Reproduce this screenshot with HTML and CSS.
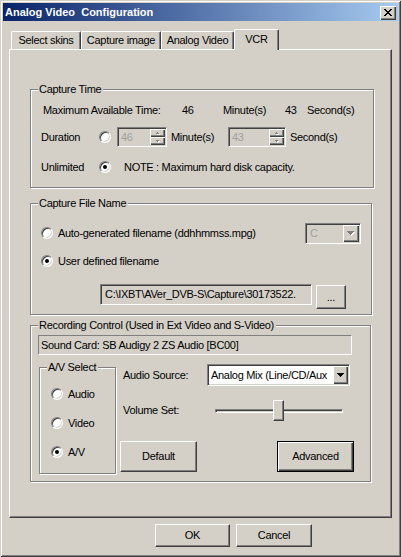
FILE: index.html
```html
<!DOCTYPE html>
<html>
<head>
<meta charset="utf-8">
<link rel="stylesheet" href="styles.css">
</head>
<body>
<div class="window">
  <div class="titlebar">
    <span class="title">Analog Video&nbsp; Configuration</span>
    <span class="close"><svg width="8" height="7" viewBox="0 0 8 7"><path d="M0 0h2v1H0zM6 0h2v1H6zM1 1h2v1H1zM5 1h2v1H5zM2 2h4v1H2zM3 3h2v1H3zM2 4h4v1H2zM1 5h2v1H1zM5 5h2v1H5zM0 6h2v1H0zM6 6h2v1H6z" fill="#000"/></svg></span>
  </div>
  <div class="tabs">
    <div class="tab tab-skins">Select skins</div>
    <div class="tab tab-capture">Capture image</div>
    <div class="tab tab-analog">Analog Video</div>
    <div class="tab tab-vcr sel">VCR</div>
  </div>
  <div class="panel">
    <div class="group g1">
      <div class="legend">Capture Time</div>
      <div class="row r1">
        <span class="c-maxlbl">Maximum Available Time:</span>
        <span class="c-min-val">46</span>
        <span class="c-min-lbl">Minute(s)</span>
        <span class="c-sec-val">43</span>
        <span>Second(s)</span>
      </div>
      <div class="row r2">
        <span class="c-optlbl">Duration</span>
        <span class="radio"></span>
        <div class="spin s1"><span class="spinval">46</span><span class="spinbtns"><span class="sbtn"><svg width="7" height="5" viewBox="0 0 7 5"><path d="M3 1h1v1h1v1H2V2h1z" fill="#fff" transform="translate(1 1)"/><path d="M3 1h1v1h1v1H2V2h1z" fill="#808080"/></svg></span><span class="sbtn"><svg width="7" height="5" viewBox="0 0 7 5"><path d="M2 1h3v1H4v1H3V2H2z" fill="#fff" transform="translate(1 1)"/><path d="M2 1h3v1H4v1H3V2H2z" fill="#808080"/></svg></span></span></div>
        <span class="c-spinlbl">Minute(s)</span>
        <div class="spin s2"><span class="spinval">43</span><span class="spinbtns"><span class="sbtn"><svg width="7" height="5" viewBox="0 0 7 5"><path d="M3 1h1v1h1v1H2V2h1z" fill="#fff" transform="translate(1 1)"/><path d="M3 1h1v1h1v1H2V2h1z" fill="#808080"/></svg></span><span class="sbtn"><svg width="7" height="5" viewBox="0 0 7 5"><path d="M2 1h3v1H4v1H3V2H2z" fill="#fff" transform="translate(1 1)"/><path d="M2 1h3v1H4v1H3V2H2z" fill="#808080"/></svg></span></span></div>
        <span class="c-seclbl">Second(s)</span>
      </div>
      <div class="row r3">
        <span class="c-optlbl">Unlimited</span>
        <span class="radio on"></span>
        <span class="c-note">NOTE : Maximum hard disk capacity.</span>
      </div>
    </div>

    <div class="group g2">
      <div class="legend">Capture File Name</div>
      <div class="row fr1">
        <span class="radio"></span>
        <span class="rlabel">Auto-generated filename (ddhhmmss.mpg)</span>
        <div class="combo combo-drive"><span class="ctext">C</span><span class="dropbtn"><svg width="8" height="5" viewBox="0 0 8 5"><path d="M0 0h7v1H6v1H5v1H4v1H3V3H2V2H1V1H0z" fill="#fff" transform="translate(1 1)"/><path d="M0 0h7v1H6v1H5v1H4v1H3V3H2V2H1V1H0z" fill="#808080"/></svg></span></div>
      </div>
      <div class="row fr2">
        <span class="radio on"></span>
        <span class="rlabel">User defined filename</span>
      </div>
      <div class="row fr3">
        <div class="pathbox">C:\IXBT\AVer_DVB-S\Capture\30173522.</div>
        <div class="btn btn-dots">...</div>
      </div>
    </div>

    <div class="group g3">
      <div class="legend">Recording Control (Used in Ext Video and S-Video)</div>
      <div class="soundcard">Sound Card: SB Audigy 2 ZS Audio [BC00]</div>
      <div class="rec-body">
        <div class="group avsel">
          <div class="legend">A/V Select</div>
          <div class="row avr"><span class="radio"></span><span class="rlabel">Audio</span></div>
          <div class="row avr"><span class="radio"></span><span class="rlabel">Video</span></div>
          <div class="row avr"><span class="radio on"></span><span class="rlabel">A/V</span></div>
        </div>
        <div class="rec-controls">
          <div class="row ctl-src">
            <span class="ctl-label">Audio Source:</span>
            <div class="combo combo-src"><span class="ctext">Analog Mix (Line/CD/Aux</span><span class="dropbtn"><svg width="7" height="4" viewBox="0 0 7 4"><path d="M0 0h7v1H6v1H5v1H4v1H3V3H2V2H1V1H0z" fill="#000"/></svg></span></div>
          </div>
          <div class="row ctl-vol">
            <span class="ctl-label">Volume Set:</span>
            <div class="slider"><div class="track"></div><div class="thumb"></div></div>
          </div>
          <div class="btnrow">
            <div class="btn btn-big">Default</div>
            <div class="btn btn-big btn-default btn-adv">Advanced</div>
          </div>
        </div>
      </div>
    </div>
  </div>
  <div class="footer">
    <div class="btn btn-ok">OK</div>
    <div class="btn btn-cancel">Cancel</div>
  </div>
</div>
</body>
</html>
```
FILE: styles.css
```css
* { box-sizing: border-box; }
html, body { margin: 0; padding: 0; }
body {
  width: 401px; height: 557px; overflow: hidden;
  background: #D4D0C8;
  font-family: "Liberation Sans", Arial, sans-serif;
  font-size: 11px; line-height: 13px; letter-spacing: -0.3px;
  color: #000;
}
.window {
  width: 401px; height: 557px; padding: 3px;
  background: #D4D0C8;
  box-shadow: inset 1px 1px #D4D0C8, inset -1px -1px #404040, inset 2px 2px #fff, inset -2px -2px #808080;
}
.titlebar {
  height: 18px; display: flex; align-items: center;
  padding: 0 2px;
  background: linear-gradient(to right, #0A246A, #A6CAF0);
}
.title { flex: 1; color: #fff; font-weight: bold; letter-spacing: 0; }
.close {
  width: 16px; height: 14px; margin-top: 1px;
  display: flex; align-items: center; justify-content: center;
  background: #D4D0C8;
  box-shadow: inset 1px 1px #fff, inset -1px -1px #404040, inset -2px -2px #808080;
}
.close svg { display: block; }

/* tabs */
.tabs {
  display: flex; align-items: flex-end; height: 20px;
  margin: 8px 0 0 8px; position: relative; z-index: 1;
}
.tab {
  height: 18px; text-align: center; line-height: 16px;
  background: #D4D0C8;
  border-top: 1px solid #fff; border-left: 1px solid #fff; border-right: 1px solid #404040;
  border-radius: 2px 2px 0 0;
  box-shadow: inset -1px 0 #808080;
}
.tab-skins { width: 70px; }
.tab-capture { width: 80px; }
.tab-analog { width: 73px; }
.tab-vcr { width: 45px; }
.tab.sel { height: 21px; margin-bottom: -1px; line-height: 18px; }

/* panel */
.panel {
  width: 383px; height: 469px; margin-left: 6px;
  border-top: 1px solid #fff; border-left: 1px solid #fff;
  border-right: 1px solid #404040; border-bottom: 1px solid #404040;
  box-shadow: inset -1px -1px #808080;
  padding: 39px 0 0 20px;
}
.group {
  border: 1px solid #808080;
  box-shadow: inset 1px 1px #fff, 1px 1px #fff;
}
.legend {
  display: block; width: max-content; height: 13px;
  margin: -7px 0 -6px 7px; padding: 0 2px 0 1px;
  background: #D4D0C8;
}
.row { display: flex; align-items: center; }

.g1 { width: 344px; height: 99px; }
.g1 .row { height: 20px; }
.r1 { margin-top: 10px; padding-left: 12px; }
.r2 { margin-top: 7px; padding-left: 10px; }
.r3 { margin-top: 10px; padding-left: 10px; }
.c-maxlbl { width: 139px; }
.c-min-val { width: 41px; }
.c-min-lbl { width: 62px; }
.c-sec-val { width: 22px; }
.c-optlbl { width: 58px; }
.c-spinlbl { width: 57px; margin-left: 4px; }
.c-seclbl { margin-left: 4px; }
.c-note { margin-left: 13px; }

.radio {
  flex: none; position: relative;
  width: 12px; height: 12px; border-radius: 50%;
  border: 1px solid; border-color: #808080 #fff #fff #808080;
  background: #fff;
  box-shadow: inset 1px 1px #404040, inset -1px -1px #D4D0C8;
}
.radio.on::after {
  content: ""; position: absolute; left: 3px; top: 3px;
  width: 4px; height: 4px; border-radius: 50%; background: #000;
}
.rlabel { margin-left: 5px; }

.sunken {
  border: 1px solid; border-color: #808080 #fff #fff #808080;
  box-shadow: inset 1px 1px #404040, inset -1px -1px #D4D0C8;
}
.spin, .combo, .pathbox {
  border: 1px solid; border-color: #808080 #fff #fff #808080;
  box-shadow: inset 1px 1px #404040, inset -1px -1px #D4D0C8;
}
.spin {
  display: flex; align-items: center; height: 20px;
  padding: 1px 1px 1px 3px; background: #D4D0C8;
}
.s1 { width: 50px; margin-left: 6px; }
.s2 { width: 58px; }
.spinval { flex: 1; color: #A0A0A0; }
.spinbtns { display: flex; flex-direction: column; width: 15px; height: 16px; }
.sbtn {
  flex: 1; display: flex; align-items: center; justify-content: center;
  background: #D4D0C8;
  box-shadow: inset 1px 1px #fff, inset -1px -1px #404040, inset -2px -2px #808080;
}
.sbtn svg { display: block; }

.g2 { width: 342px; height: 112px; margin-top: 15px; }
.fr1 { margin-top: 18px; height: 22px; padding-left: 10px; }
.fr2 { margin-top: 8px; height: 18px; padding-left: 10px; }
.fr3 { margin-top: 14px; height: 24px; align-items: flex-start; padding-left: 69px; }

.combo { display: flex; padding: 1px; }
.ctext { flex: 1; padding-left: 2px; white-space: nowrap; overflow: hidden; display: flex; align-items: center; }
.dropbtn {
  flex: none; width: 16px; display: flex; align-items: center; justify-content: center;
  background: #D4D0C8;
  box-shadow: inset 1px 1px #fff, inset -1px -1px #404040, inset -2px -2px #808080;
}
.dropbtn svg { display: block; }
.combo-drive { width: 56px; height: 21px; margin-left: auto; margin-right: 10px; background: #D4D0C8; }
.combo-drive .ctext { color: #A0A0A0; padding-left: 3px; }
.combo-src { width: 143px; height: 22px; background: #fff; }
.combo-src .dropbtn { width: 15px; }

.pathbox {
  width: 212px; height: 21px; background: #D4D0C8;
  padding: 0 0 0 4px; display: flex; align-items: center; white-space: nowrap; overflow: hidden;
}
.btn {
  display: flex; align-items: center; justify-content: center;
  background: #D4D0C8;
  border: 1px solid; border-color: #fff #404040 #404040 #fff;
  box-shadow: inset -1px -1px #808080;
}
.btn-dots { width: 30px; height: 24px; margin: 1px 0 0 4px; }

.g3 { width: 341px; height: 157px; margin-top: 10px; }
.soundcard {
  width: 314px; height: 20px; margin: 9px 0 0 7px; padding-left: 2px;
  display: flex; align-items: center;
  border: 1px solid; border-color: #808080 #fff #fff #808080;
}
.rec-body { display: flex; align-items: flex-start; margin-top: 9px; }
.avsel { width: 77px; height: 107px; margin: 3px 0 0 8px; flex: none; }
.avr { height: 18px; margin-top: 11px; padding-left: 11px; }
.avsel .legend + .avr { margin-top: 17px; }
.rec-controls { margin-left: 4px; width: 235px; }
.ctl-label { width: 87px; padding-left: 3px; flex: none; }
.ctl-src { height: 22px; }
.ctl-vol { height: 21px; margin-top: 14px; }
.slider { position: relative; width: 144px; height: 21px; display: flex; align-items: center; }
.track {
  flex: 1; margin: 0 8px; height: 4px;
  border: 1px solid; border-color: #808080 #fff #fff #808080;
  box-shadow: inset 1px 1px #404040;
}
.thumb {
  position: absolute; left: 66px; top: 0; width: 11px; height: 21px;
  background: #D4D0C8;
  border: 1px solid; border-color: #fff #404040 #404040 #fff;
  box-shadow: inset -1px -1px #808080;
}
.btnrow { display: flex; margin-top: 20px; }
.btn-big { width: 77px; height: 31px; }
.btn-adv { margin-left: 80px; }
.btn-default {
  border-color: #000;
  box-shadow: inset 1px 1px #fff, inset -1px -1px #404040, inset -2px -2px #808080;
}

.footer { display: flex; margin: 6px 0 0 152px; }
.btn-ok { width: 75px; height: 23px; }
.btn-cancel { width: 76px; height: 23px; margin-left: 6px; }
```
